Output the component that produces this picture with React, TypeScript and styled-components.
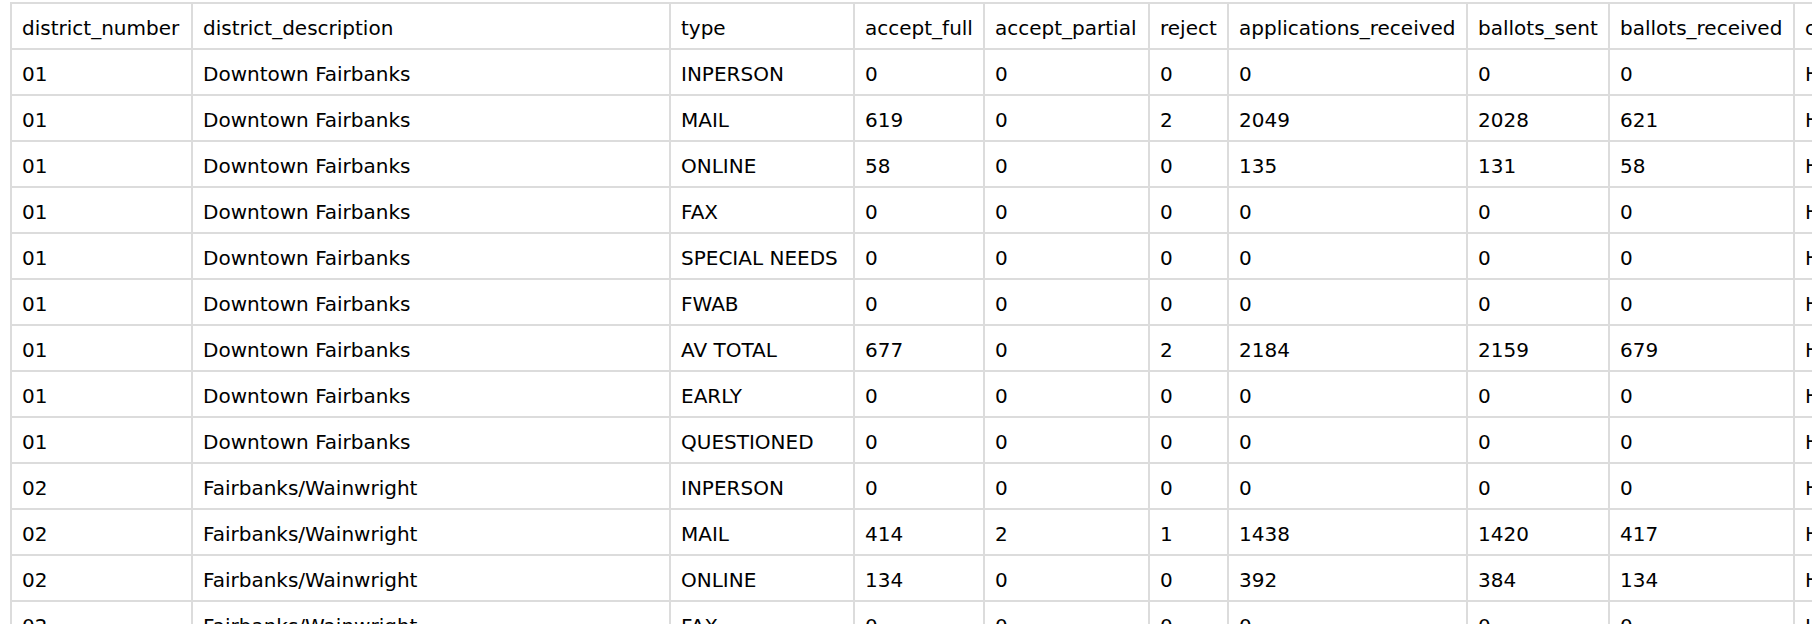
import React from "react";
import styled, { createGlobalStyle } from "styled-components";

const GlobalStyle = createGlobalStyle`
  html, body {
    margin: 0;
    padding: 0;
    background: #ffffff;
    overflow: hidden;
  }
  body {
    font-family: "DejaVu Sans", Verdana, sans-serif;
    color: #000000;
  }
`;

const Page = styled.div`
  padding: 2px 0 0 10px;
  width: max-content;
`;

const Table = styled.table<{ $w: number }>`
  width: ${(p) => p.$w}px;
  border-collapse: separate;
  border-spacing: 0;
  table-layout: fixed;
  border-top: 2px solid #dcdcdc;
  border-left: 2px solid #dcdcdc;
  font-size: 20px;
  line-height: 24px;
  white-space: nowrap;
`;

const Col = styled.col<{ $w: number }>`
  width: ${(p) => p.$w}px;
`;

const cellStyles = `
  box-sizing: border-box;
  height: 46px;
  padding: 12px 10px 8px 10px;
  border-right: 2px solid #dcdcdc;
  border-bottom: 2px solid #dcdcdc;
  text-align: left;
  vertical-align: middle;
  overflow: hidden;
  font-weight: 400;
`;

const HeadCell = styled.th`
  ${cellStyles}
`;

const Cell = styled.td`
  ${cellStyles}
`;

const columns: { key: string; w: number }[] = [
  { key: "district_number", w: 181 },
  { key: "district_description", w: 478 },
  { key: "type", w: 184 },
  { key: "accept_full", w: 130 },
  { key: "accept_partial", w: 165 },
  { key: "reject", w: 79 },
  { key: "applications_received", w: 239 },
  { key: "ballots_sent", w: 142 },
  { key: "ballots_received", w: 185 },
  { key: "chamber", w: 160 },
];

const tableWidth = columns.reduce((s, c) => s + c.w, 0) + 2;

type Row = [string, string, string, number, number, number, number, number, number, string];

const d1 = "Downtown Fairbanks";
const d2 = "Fairbanks/Wainwright";

const rows: Row[] = [
  ["01", d1, "INPERSON", 0, 0, 0, 0, 0, 0, "HOUSE"],
  ["01", d1, "MAIL", 619, 0, 2, 2049, 2028, 621, "HOUSE"],
  ["01", d1, "ONLINE", 58, 0, 0, 135, 131, 58, "HOUSE"],
  ["01", d1, "FAX", 0, 0, 0, 0, 0, 0, "HOUSE"],
  ["01", d1, "SPECIAL NEEDS", 0, 0, 0, 0, 0, 0, "HOUSE"],
  ["01", d1, "FWAB", 0, 0, 0, 0, 0, 0, "HOUSE"],
  ["01", d1, "AV TOTAL", 677, 0, 2, 2184, 2159, 679, "HOUSE"],
  ["01", d1, "EARLY", 0, 0, 0, 0, 0, 0, "HOUSE"],
  ["01", d1, "QUESTIONED", 0, 0, 0, 0, 0, 0, "HOUSE"],
  ["02", d2, "INPERSON", 0, 0, 0, 0, 0, 0, "HOUSE"],
  ["02", d2, "MAIL", 414, 2, 1, 1438, 1420, 417, "HOUSE"],
  ["02", d2, "ONLINE", 134, 0, 0, 392, 384, 134, "HOUSE"],
  ["02", d2, "FAX", 0, 0, 0, 0, 0, 0, "HOUSE"],
  ["02", d2, "SPECIAL NEEDS", 0, 0, 0, 0, 0, 0, "HOUSE"],
];

export default function App() {
  return (
    <>
      <GlobalStyle />
      <Page>
        <Table $w={tableWidth}>
          <colgroup>
            {columns.map((c) => (
              <Col key={c.key} $w={c.w} />
            ))}
          </colgroup>
          <thead>
            <tr>
              {columns.map((c) => (
                <HeadCell key={c.key}>{c.key}</HeadCell>
              ))}
            </tr>
          </thead>
          <tbody>
            {rows.map((r, i) => (
              <tr key={i}>
                {r.map((v, j) => (
                  <Cell key={j}>{v}</Cell>
                ))}
              </tr>
            ))}
          </tbody>
        </Table>
      </Page>
    </>
  );
}
